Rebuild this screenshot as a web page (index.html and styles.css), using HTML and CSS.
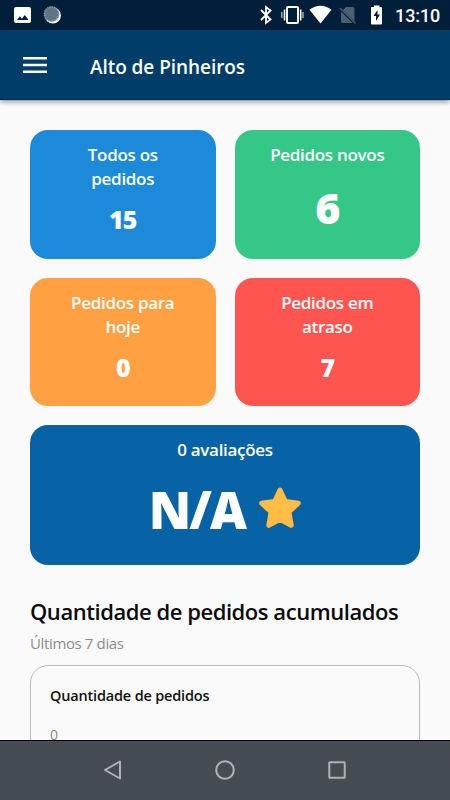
FILE: index.html
```html
<!DOCTYPE html>
<html lang="pt-BR">

	<head>
		<meta charset="utf-8">
		<title>Alto de Pinheiros</title>
		<meta name="viewport" content="width=device-width, initial-scale=1.0">
		<link rel="stylesheet" href="styles.css">
	</head>

	<body>
		<div class="status-bar">
			<svg class="status-left" width="70" height="30" viewBox="0 0 70 30">
				<path fill="#fff" fill-rule="evenodd" d="M16 7h13a2 2 0 0 1 2 2v12a2 2 0 0 1-2 2H16a2 2 0 0 1-2-2V9a2 2 0 0 1 2-2zM17 20h11.500l-3.700-5-2.900 3.700-2-2.500z"/>
				<circle cx="52.900" cy="15.400" r="8.100" fill="#f0f3f5"/>
				<circle cx="51.500" cy="14" r="7.600" fill="#607386"/>
				<circle cx="51.500" cy="14" r="7" fill="none" stroke="#8d9ba9" stroke-width="2" stroke-dasharray="1 1.200"/>
			</svg>
			<svg class="status-icons" width="130" height="30" viewBox="255 0 130 30">
				<path fill="none" stroke="#fff" stroke-width="1.800" d="M261 10l9.500 9.500-4.500 3.500V7l4.500 3.500L261 20"/>
				<rect x="287" y="7" width="11" height="16" rx="1" fill="none" stroke="#fff" stroke-width="2"/>
				<path stroke="#fff" stroke-width="1.600" d="M284.500 9.500v11M300.700 9.500v11"/>
				<path stroke="#c5cdd4" stroke-width="1.200" d="M281.800 12v6M303 12v6"/>
				<path fill="#fff" d="M309.500 9.800Q320.500 1.800 331.500 9.800L320.500 23.500z"/>
				<path fill="#4c6073" d="M346 7h7a1.500 1.500 0 0 1 1.500 1.500v13L343 10zM341 11.500L352.500 23H342.500a1.500 1.500 0 0 1-1.500-1.500z"/>
				<path stroke="#4c6073" stroke-width="1.300" d="M340 8l15.500 15.500"/>
				<path fill="#fff" fill-rule="evenodd" d="M374 5.500h5.500V7H381a1 1 0 0 1 1 1v15.500a1 1 0 0 1-1 1h-9a1 1 0 0 1-1-1V8a1 1 0 0 1 1-1h2zM377.500 10l-4 6h2.500v5l4-6.500h-2.500z"/>
			</svg>
			<span class="clock">13:10</span>
		</div>

		<header>
			<svg class="menu" width="24" height="18" viewBox="0 0 24 18">
				<path stroke="#fff" stroke-width="2.600" d="M0 2.300h24M0 9h24M0 15.700h24"/>
			</svg>
			<h1>Alto de Pinheiros</h1>
		</header>

		<main>
			<section class="cards">
				<div class="card blue">
					<p class="label">Todos os<br>pedidos</p>
					<p class="number">15</p>
				</div>
				<div class="card green">
					<p class="label">Pedidos novos</p>
					<p class="number big">6</p>
				</div>
				<div class="card orange">
					<p class="label">Pedidos para<br>hoje</p>
					<p class="number">0</p>
				</div>
				<div class="card red">
					<p class="label">Pedidos em<br>atraso</p>
					<p class="number">7</p>
				</div>
				<div class="card rating">
					<p class="label">0 avaliações</p>
					<div class="score">
						<span>N/A</span>
						<svg class="star" width="42" height="41" viewBox="0 0 42 41">
							<path fill="#ffbd45" stroke="#ffbd45" stroke-width="5" stroke-linejoin="round" d="M21 3l5.300 11.500 13 1.700-9.400 8.800 2.300 13.300L21 32.300 9.800 38.300l2.300-13.300L2.700 16.200l13-1.700z"/>
						</svg>
					</div>
				</div>
			</section>

			<h2>Quantidade de pedidos acumulados</h2>
			<p class="period">Últimos 7 dias</p>

			<section class="chart">
				<h3>Quantidade de pedidos</h3>
				<p class="axis">0</p>
			</section>
		</main>

		<nav>
			<svg width="20" height="22" viewBox="0 0 20 22">
				<path d="M17 2.500v17L2 11z"/>
			</svg>
			<svg width="20" height="22" viewBox="0 0 20 22">
				<circle cx="10" cy="11" r="8.800"/>
			</svg>
			<svg width="20" height="22" viewBox="0 0 20 22">
				<rect x="2.300" y="3.200" width="15.400" height="15.600" rx="0.500"/>
			</svg>
		</nav>
	</body>

</html>
```
FILE: styles.css
```css
* {
	box-sizing: border-box;
}
body {
	margin: 0;
	height: 800px;
	overflow: hidden;
	display: flex;
	flex-direction: column;
	background-color: #fafafa;
	font-family: "Open Sans", "Noto Sans", sans-serif;
}
h1, h2, h3, p {
	margin: 0;
}
svg {
	display: block;
	flex: none;
}

.status-bar {
	flex: none;
	display: flex;
	height: 30px;
	background: #001e3a;
}
.status-icons {
	margin-left: 185px;
}
.clock {
	margin-left: 10px;
	color: #fff;
	font: 500 18px/31px Roboto, sans-serif;
	letter-spacing: -0.1px;
}

header {
	flex: none;
	display: flex;
	align-items: center;
	height: 70px;
	padding: 1px 23px 0;
	background: #003e69;
	border-bottom: 1px solid #00285a;
	box-shadow: 0 2px 5px rgba(0, 0, 0, .4);
	z-index: 1;
}
h1 {
	margin: 3px 0 0 43px;
	color: #fff;
	font-size: 19px;
	font-weight: 600;
	line-height: 28px;
	letter-spacing: -0.060px;
}

main {
	flex: 1;
	min-height: 0;
	overflow: hidden;
	padding: 30px 30px 0;
}
.cards {
	display: grid;
	grid-template-columns: 1fr 1fr;
	grid-template-rows: 128.500px 128.500px 140px;
	gap: 19px;
}
.card {
	padding-top: 13px;
	border-radius: 18px;
	color: #fff;
	text-align: center;
}
.blue { background: #1c8ad8; }
.green { background: #34c788; }
.orange { background: #ffa043; }
.red { background: #ff5550; }
.rating {
	grid-column: span 2;
	background: #0763a5;
}
.label {
	font-size: 17px;
	font-weight: 600;
	line-height: 24px;
	letter-spacing: -0.300px;
}
.number {
	margin-top: 10px;
	font-size: 25px;
	font-weight: 800;
	line-height: 36px;
	letter-spacing: -1px;
}
.big {
	margin-top: 11px;
	font-size: 43px;
	line-height: 60px;
}
.score {
	display: flex;
	justify-content: center;
	margin-top: 11px;
	font-size: 51px;
	font-weight: 800;
	line-height: 72px;
	letter-spacing: -1.800px;
}
.star {
	margin: 14px 0 0 14px;
}

h2 {
	margin-top: 30px;
	color: #0b0b0b;
	font-size: 22px;
	font-weight: 600;
	line-height: 32px;
	letter-spacing: -0.450px;
}
.period {
	margin-top: 4px;
	color: #8c8c8c;
	font-size: 15px;
	line-height: 24px;
	letter-spacing: -0.370px;
}
.chart {
	height: 200px;
	margin-top: 10px;
	padding: 19px;
	border: 1px solid #b9b9b9;
	border-radius: 18px;
}
h3 {
	color: #111;
	font-size: 14.500px;
	font-weight: 600;
	line-height: 22px;
	letter-spacing: -0.180px;
}
.axis {
	margin-top: 17px;
	color: #888;
	font-size: 14px;
	line-height: 22px;
}

nav {
	flex: none;
	display: flex;
	justify-content: center;
	gap: 92px;
	height: 60px;
	padding-top: 18px;
	background: #454d52;
	border-top: 1px solid #000;
}
nav svg {
	fill: none;
	stroke: #afb3b5;
	stroke-width: 2;
	stroke-linejoin: round;
}
```
